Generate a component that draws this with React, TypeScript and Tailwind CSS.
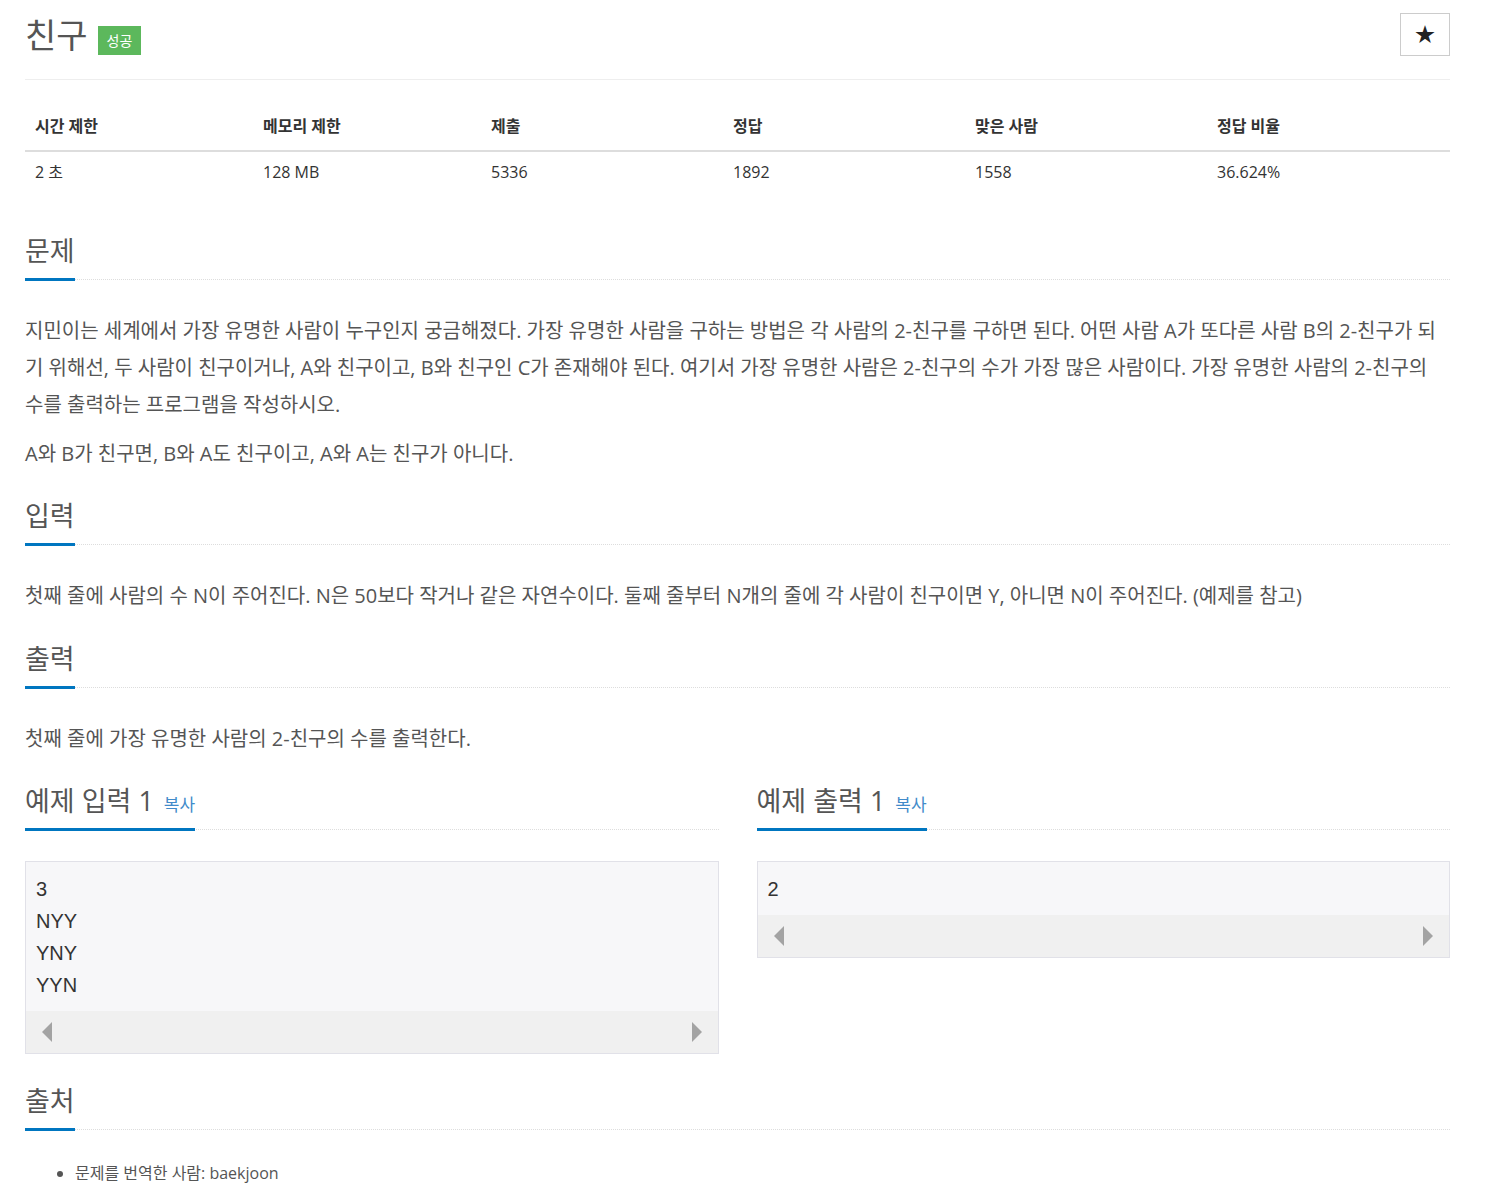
import React from "react";

const font = { fontFamily: '"Open Sans", "Noto Sans CJK KR", sans-serif' };

const stats = [
  { label: "시간 제한", value: "2 초" },
  { label: "메모리 제한", value: "128 MB" },
  { label: "제출", value: "5336" },
  { label: "정답", value: "1892" },
  { label: "맞은 사람", value: "1558" },
  { label: "정답 비율", value: "36.624%" },
];

function Headline({ children }: { children: React.ReactNode }) {
  return (
    <div className="border-b border-dotted border-[#ddd]">
      <h2 className="inline-block h-[47px] border-b-[3px] border-[#0076c0] -mb-[2px] pb-[10px] text-[27px] leading-[34px] text-[#555]">
        {children}
      </h2>
    </div>
  );
}

function ScrollBar() {
  return (
    <div className="flex h-[42px] items-center justify-between bg-[#f0f0f0] px-[16px]">
      <span className="h-0 w-0 border-y-[10px] border-r-[10px] border-y-transparent border-r-[#a3a3a3]" />
      <span className="h-0 w-0 border-y-[10px] border-l-[10px] border-y-transparent border-l-[#a3a3a3]" />
    </div>
  );
}

function Sample({ title, lines }: { title: string; lines: string[] }) {
  return (
    <div className="flex-1">
      <Headline>
        {title} <span className="ml-[3px] text-[17px] leading-none text-[#428bca]">복사</span>
      </Headline>
      <div className="mt-[31px] border border-[#e1e1e8] bg-[#f7f7f9]">
        <div
          className="px-[10px] pt-[11px] pb-[10px] text-[20px] leading-[32px] text-[#333]"
          style={{ fontFamily: '"Liberation Sans", Arial, sans-serif' }}
        >
          {lines.map((l, i) => (
            <div key={i}>{l}</div>
          ))}
        </div>
        <ScrollBar />
      </div>
    </div>
  );
}

export default function App() {
  return (
    <div className="min-h-screen bg-white text-[#555]" style={font}>
      <div className="pl-[25px] pr-[38px]">
        {/* Title */}
        <div className="flex items-start justify-between border-b border-[#eee] pt-[13px] pb-[23px]">
          <div className="flex items-center gap-[10px] pt-[2px]">
            <h1 className="text-[34px] leading-[40px] text-[#555]">친구</h1>
            <span className="mt-[10px] bg-[#5cb85c] px-[9px] py-[5px] text-[14px] leading-[19px] text-white">
              성공
            </span>
          </div>
          <button className="flex h-[43px] w-[50px] items-center justify-center border border-[#ccc] text-[20px] text-[#222]">
            ★
          </button>
        </div>

        {/* Stats table */}
        <div className="mt-[22px]">
          <div className="grid grid-cols-[228px_228px_242px_242px_242px_1fr] border-b-2 border-[#ddd]">
            {stats.map((s) => (
              <div key={s.label} className="px-[10px] py-[12px] text-[16px] font-bold leading-[24px] text-[#333]">
                {s.label}
              </div>
            ))}
          </div>
          <div className="grid grid-cols-[228px_228px_242px_242px_242px_1fr]">
            {stats.map((s) => (
              <div key={s.label} className="px-[10px] py-[8px] text-[16px] leading-[24px] text-[#333]">
                {s.value}
              </div>
            ))}
          </div>
        </div>

        {/* 문제 */}
        <section className="mt-[42px]">
          <Headline>문제</Headline>
          <div className="mt-[32px] text-[20px] leading-[37px]">
            <p className="mb-[12px]">
              지민이는 세계에서 가장 유명한 사람이 누구인지 궁금해졌다. 가장 유명한 사람을 구하는 방법은 각 사람의 2-친구를 구하면 된다. 어떤 사람 A가 또다른 사람 B의 2-친구가 되기 위해선, 두 사람이 친구이거나, A와 친구이고, B와 친구인 C가 존재해야 된다. 여기서 가장 유명한 사람은 2-친구의 수가 가장 많은 사람이다. 가장 유명한 사람의 2-친구의 수를 출력하는 프로그램을 작성하시오.
            </p>
            <p>A와 B가 친구면, B와 A도 친구이고, A와 A는 친구가 아니다.</p>
          </div>
        </section>

        {/* 입력 */}
        <section className="mt-[27px]">
          <Headline>입력</Headline>
          <div className="mt-[32px] text-[20px] leading-[37px]">
            <p>
              첫째 줄에 사람의 수 N이 주어진다. N은 50보다 작거나 같은 자연수이다. 둘째 줄부터 N개의 줄에 각 사람이 친구이면 Y, 아니면 N이 주어진다. (예제를 참고)
            </p>
          </div>
        </section>

        {/* 출력 */}
        <section className="mt-[28px]">
          <Headline>출력</Headline>
          <div className="mt-[32px] text-[20px] leading-[37px]">
            <p>첫째 줄에 가장 유명한 사람의 2-친구의 수를 출력한다.</p>
          </div>
        </section>

        {/* 예제 */}
        <div className="mt-[27px] flex items-start gap-[38px]">
          <Sample title="예제 입력 1" lines={["3", "NYY", "YNY", "YYN"]} />
          <Sample title="예제 출력 1" lines={["2"]} />
        </div>

        {/* 출처 */}
        <section className="mt-[30px]">
          <Headline>출처</Headline>
          <ul className="mt-[31px] list-disc pl-[50px] text-[16px] leading-[24px]">
            <li>문제를 번역한 사람: baekjoon</li>
          </ul>
        </section>
      </div>
    </div>
  );
}
